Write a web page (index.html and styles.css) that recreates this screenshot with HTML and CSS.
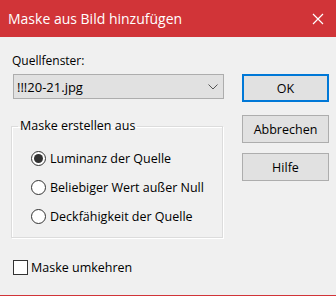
FILE: index.html
```html
<!DOCTYPE html>
<html lang="de">
<head>
    <meta charset="UTF-8">
    <title>Maske aus Bild hinzufügen</title>
    <link rel="stylesheet" href="styles.css">
</head>
<body>
    <div class="dialog">
        <!-- Title bar -->
        <div class="titlebar">
            <span class="title">Maske aus Bild hinzufügen</span>
            <svg class="close" width="12" height="12" viewBox="0 0 12 12">
                <path d="M1 1 L11 11 M11 1 L1 11" stroke="#fff" stroke-width="1.2" fill="none"/>
            </svg>
        </div>

        <div class="content">
            <div class="left">
                <div class="label">Quellfenster:</div>
                <div class="combo">
                    <span>!!!20-21.jpg</span>
                    <svg class="chevron" width="10" height="6" viewBox="0 0 10 6">
                        <path d="M0.5 0.5 L5 5 L9.5 0.5" stroke="#555" stroke-width="1" fill="none"/>
                    </svg>
                </div>

                <fieldset class="group">
                    <legend>Maske erstellen aus</legend>
                    <label class="radio-row">
                        <span class="radio checked"></span>
                        Luminanz der Quelle
                    </label>
                    <label class="radio-row">
                        <span class="radio"></span>
                        Beliebiger Wert außer Null
                    </label>
                    <label class="radio-row">
                        <span class="radio"></span>
                        Deckfähigkeit der Quelle
                    </label>
                </fieldset>
            </div>

            <div class="right">
                <button class="btn default">OK</button>
                <button class="btn cancel">Abbrechen</button>
                <button class="btn">Hilfe</button>
            </div>
        </div>

        <label class="check-row">
            <span class="checkbox"></span>
            Maske umkehren
        </label>
    </div>
</body>
</html>
```

FILE: styles.css
```css
* {
    margin: 0;
    padding: 0;
    box-sizing: border-box;
}

body {
    font-family: 'Open Sans', 'Noto Sans', sans-serif;
    font-size: 12.5px;
    color: #000;
    background: #f0f0f0;
    width: 336px;
    height: 296px;
    overflow: hidden;
}

.dialog {
    height: 296px;
    border-bottom: 1px solid #d13438;
}

/* Title bar */
.titlebar {
    height: 37px;
    background: #d13438;
    display: flex;
    align-items: center;
    justify-content: space-between;
    padding: 0 12px 0 8px;
}

.title {
    color: #fff;
    font-size: 14px;
}

.close {
    display: block;
}

/* Main area */
.content {
    display: grid;
    grid-template-columns: 213px 87px;
    column-gap: 18px;
    padding: 16px 0 0 11px;
}

.label {
    font-size: 12px;
    line-height: 16px;
    padding-left: 1px;
}

.combo {
    margin: 5px 0 0 2px;
    width: 211px;
    height: 25px;
    background: #e1e1e1;
    border: 1px solid #adadad;
    display: flex;
    align-items: center;
    justify-content: space-between;
    padding: 0 5px 0 3px;
    font-size: 13px;
}

.chevron {
    display: block;
}

/* Group box */
.group {
    margin-top: 19px;
    width: 212px;
    height: 120px;
    border: 1px solid #dcdcdc;
    box-shadow: inset 1px 1px 0 #fff, 1px 1px 0 #fff;
    padding: 10px 0 0 19px;
}

.group legend {
    padding: 0 2px;
    margin-left: -13px;
    line-height: 16px;
}

.radio-row {
    display: flex;
    align-items: center;
    height: 29px;
    gap: 4px;
}

.radio {
    width: 15px;
    height: 15px;
    border: 1px solid #333;
    border-radius: 50%;
    background: #fff;
    display: flex;
    align-items: center;
    justify-content: center;
}

.radio.checked::after {
    content: '';
    width: 9px;
    height: 9px;
    border-radius: 50%;
    background: #333;
}

/* Buttons */
.right {
    display: flex;
    flex-direction: column;
    padding-top: 21px;
}

.btn {
    font-family: inherit;
    font-size: 12.5px;
    color: #000;
    width: 87px;
    height: 28px;
    margin-top: 10px;
    background: #e1e1e1;
    border: 1px solid #adadad;
}

.btn.default {
    margin-top: 0;
    border: 2px solid #0078d7;
}

.btn.cancel {
    margin-top: 13px;
}

/* Checkbox */
.check-row {
    display: flex;
    align-items: center;
    gap: 3px;
    padding: 0 0 0 13px;
    margin-top: 21px;
}

.checkbox {
    width: 15px;
    height: 15px;
    border: 1px solid #333;
    background: #fff;
}
```
